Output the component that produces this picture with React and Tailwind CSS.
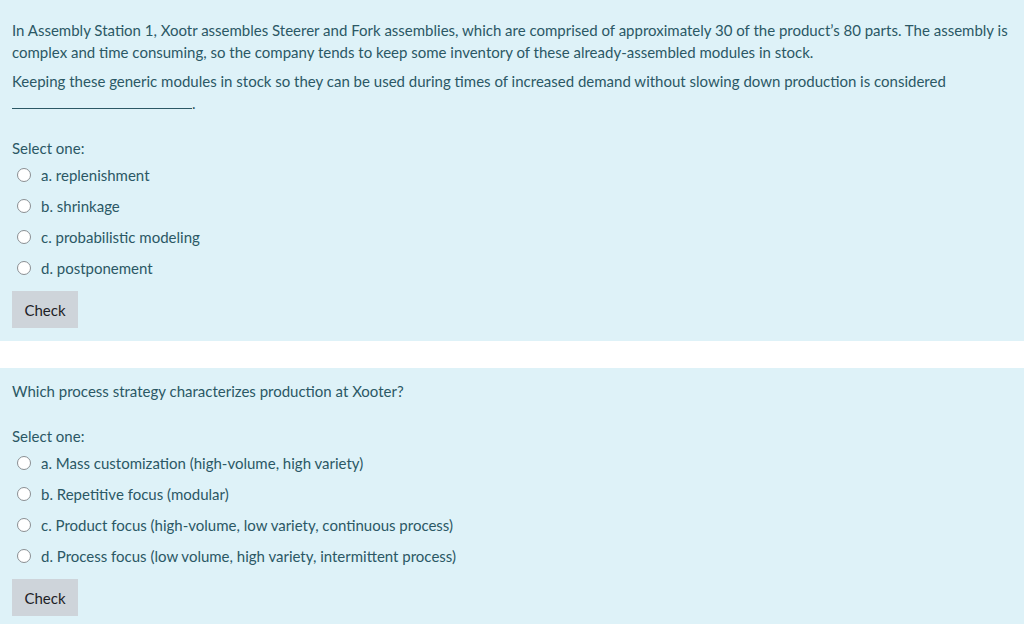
import React from "react";

const font = { fontFamily: '"Segoe UI", Lato, "Open Sans", sans-serif' };

function Option({ label }) {
  return (
    <label className="flex h-[31px] items-center pl-[5px]">
      <span className="h-[14px] w-[14px] shrink-0 rounded-full border border-[#8a8f93] bg-white" />
      <span className="ml-[10px]">{label}</span>
    </label>
  );
}

function CheckButton() {
  return (
    <button className="mt-[8px] h-[37px] w-[66px] bg-[#ced4da] text-[15px] text-[#1d2125]">
      Check
    </button>
  );
}

export default function App() {
  return (
    <div className="min-h-[624px] w-[1024px] bg-white text-[15px] leading-[22px] text-[#2b5865]" style={font}>
      <div className="bg-[#def2f8] px-[12px] pb-[13px] pt-[19px]">
        <p className="mb-[7px]">
          In Assembly Station 1, Xootr assembles Steerer and Fork assemblies, which are comprised of approximately 30 of the product’s 80 parts. The assembly is complex and time consuming, so the company tends to keep some inventory of these already-assembled modules in stock.
        </p>
        <p>
          Keeping these generic modules in stock so they can be used during times of increased demand without slowing down production is considered
          <br />
          <span className="inline-block h-[15px] w-[180px] border-b border-[#2b5865] align-baseline" />.
        </p>
        <div className="mt-[23px]">Select one:</div>
        <Option label="a. replenishment" />
        <Option label="b. shrinkage" />
        <Option label="c. probabilistic modeling" />
        <Option label="d. postponement" />
        <CheckButton />
      </div>
      <div className="h-[27px]" />
      <div className="bg-[#def2f8] px-[12px] pb-[12px] pt-[12px]">
        <p>Which process strategy characterizes production at Xooter?</p>
        <div className="mt-[23px]">Select one:</div>
        <Option label="a. Mass customization (high-volume, high variety)" />
        <Option label="b. Repetitive focus (modular)" />
        <Option label="c. Product focus (high-volume, low variety, continuous process)" />
        <Option label="d. Process focus (low volume, high variety, intermittent process)" />
        <CheckButton />
      </div>
    </div>
  );
}
